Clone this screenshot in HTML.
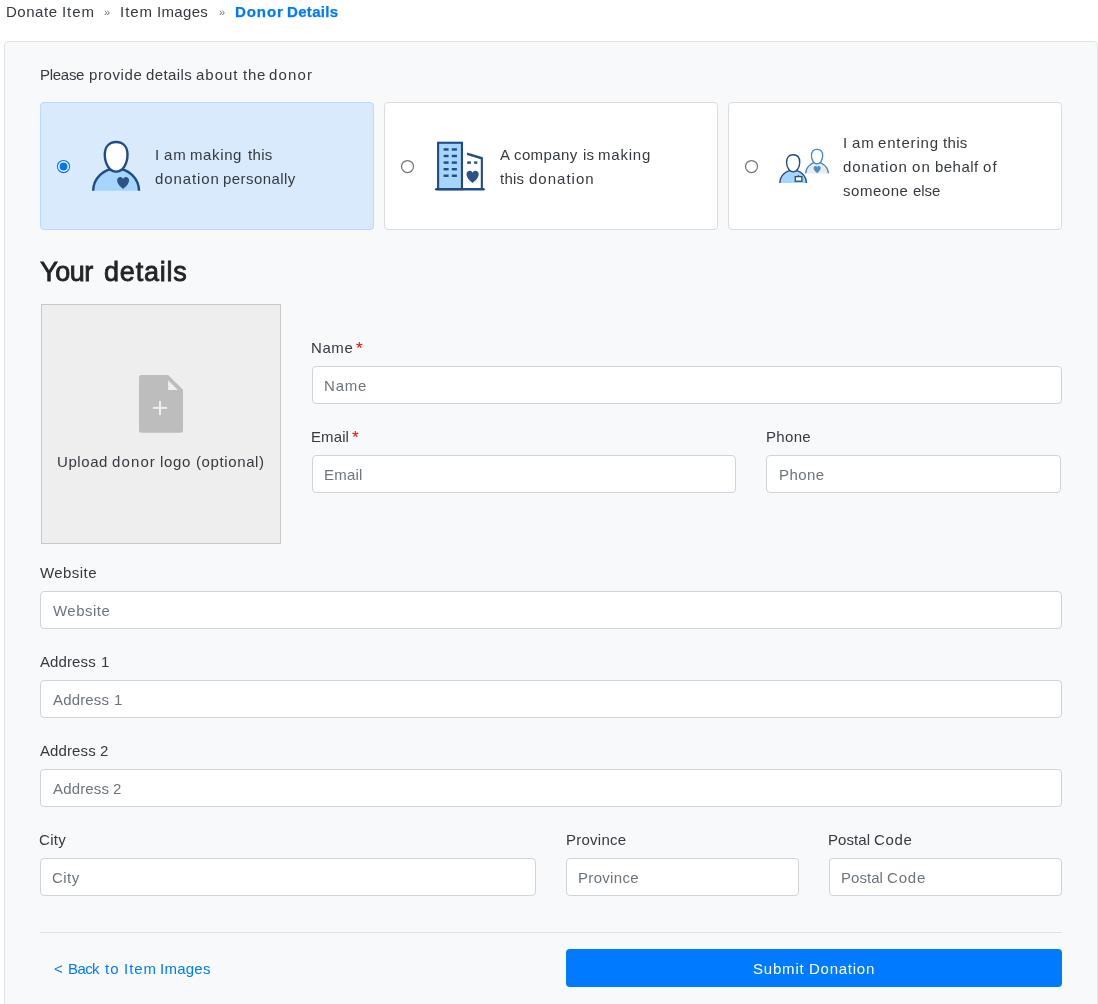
<!DOCTYPE html>
<html><head><meta charset="utf-8">
<style>
*{box-sizing:border-box}
html,body{margin:0;padding:0}
body{width:1098px;height:1004px;overflow:hidden;background:#fff;font-family:"Liberation Sans",sans-serif;font-size:16px;color:#212529;position:relative}
.abs{position:absolute}
.x{position:absolute;white-space:nowrap;will-change:transform}
.sep{position:absolute;font-size:11px;line-height:12px;color:#6c757d;top:6px;will-change:transform}
.star{position:absolute;color:#f00;font-size:17px;line-height:20px;will-change:transform}
.card{left:4px;top:41px;width:1094px;height:963px;background:#f8f9fa;border:1px solid #dfe3e8;border-bottom:0;border-radius:5px 5px 0 0}
.opt{top:102px;width:334px;height:128px;background:#fff;border:1px solid #ddd;border-radius:4px}
.opt.sel{background:#d8eafc;border-color:#b8daff}
.inp{position:absolute;height:38px;background:#fff;border:1px solid #ced4da;border-radius:4px}
.upload{left:41px;top:304px;width:240px;height:240px;background:#eee;border:1px solid #c8c8c8}
.btn{left:566px;top:949px;width:496px;height:38px;background:#007bff;border-radius:4px}
svg{position:absolute;overflow:visible}
</style></head><body>
<div class="abs card"></div>
<div class="abs opt sel" style="left:40px"></div>
<div class="abs opt" style="left:384px"></div>
<div class="abs opt" style="left:728px"></div>
<div class="abs upload"></div>
<div class="inp" style="left:312px;top:366px;width:750px"></div>
<div class="inp" style="left:312px;top:455px;width:424px"></div>
<div class="inp" style="left:766px;top:455px;width:295px"></div>
<div class="inp" style="left:40px;top:591px;width:1022px"></div>
<div class="inp" style="left:40px;top:680px;width:1022px"></div>
<div class="inp" style="left:40px;top:769px;width:1022px"></div>
<div class="inp" style="left:40px;top:858px;width:496px"></div>
<div class="inp" style="left:566px;top:858px;width:233px"></div>
<div class="inp" style="left:829px;top:858px;width:233px"></div>
<div class="abs" style="left:40px;top:932px;width:1022px;height:1px;background:#dee2e6"></div>
<div class="abs btn"></div>
<div class="sep" style="left:104px">&raquo;</div>
<div class="sep" style="left:218.5px">&raquo;</div>
<div class="star" style="left:355.5px;top:339px">*</div>
<div class="star" style="left:351.5px;top:428px">*</div>
<!-- icon 1 -->
<svg style="left:86px;top:136px" width="60" height="60" viewBox="0 0 60 60">
<path d="M7.114,54.7 A23,23 0 0 1 53.086,54.7" fill="#a6d5fe" stroke="#204c84" stroke-width="2.4"/>
<path fill="#fff" stroke="#204c84" stroke-width="2.4" d="M30.15,6 C37.3,6 41.5,11 41.5,18.8 C41.5,27.8 36.8,35.6 30.15,35.6 C23.5,35.6 18.8,27.8 18.8,18.8 C18.8,11 23,6 30.15,6Z"/>
<path d="M6,12 C5.2,11.4 0,7.6 0,3.4 C0,1.4 1.5,0 3.2,0 C4.5,0 5.5,0.8 6,1.9 C6.5,0.8 7.5,0 8.8,0 C10.5,0 12,1.4 12,3.4 C12,7.6 6.8,11.4 6,12Z" fill="#2c5286" transform="translate(31.1 40.9)"/>
</svg>
<!-- icon 2 -->
<svg style="left:430px;top:136px" width="60" height="60" viewBox="0 0 60 60">
<rect x="8.1" y="6.75" width="23.85" height="46.4" fill="#a6d5fe" stroke="#204c84" stroke-width="2.1"/>
<g fill="#244c82">
<rect x="13.6" y="12.25" width="5" height="2.4"/><rect x="21.8" y="12.25" width="5.1" height="2.4"/>
<rect x="13.6" y="18.8" width="5" height="2.4"/><rect x="21.8" y="18.8" width="5.1" height="2.4"/>
<rect x="13.6" y="25.4" width="5" height="2.4"/><rect x="21.8" y="25.4" width="5.1" height="2.4"/>
<rect x="13.6" y="32" width="5" height="2.4"/><rect x="21.8" y="32" width="5.1" height="2.4"/>
<rect x="13.6" y="38.55" width="5" height="2.4"/><rect x="21.8" y="38.55" width="5.1" height="2.4"/>
<rect x="37.2" y="25.4" width="3.7" height="2.4"/><rect x="44.1" y="25.4" width="3.2" height="2.4"/>
</g>
<path d="M37.06,16.45 L52.9,21.2 L52.9,53 L50.8,53 L50.8,23.3 L37.06,19.1Z" fill="#204c84"/>
<path d="M6.2,53.2 H53.6" fill="none" stroke="#204c84" stroke-width="2.4" stroke-linecap="round"/>
<path d="M6,12 C5.2,11.4 0,7.6 0,3.4 C0,1.4 1.5,0 3.2,0 C4.5,0 5.5,0.8 6,1.9 C6.5,0.8 7.5,0 8.8,0 C10.5,0 12,1.4 12,3.4 C12,7.6 6.8,11.4 6,12Z" fill="#2c5286" transform="translate(36.5 34.7) scale(1.017)"/>
</svg>
<!-- icon 3 -->
<svg style="left:774px;top:140px" width="60" height="50" viewBox="0 0 60 50">
<g transform="translate(28.13 6.3) scale(0.495)">
<path d="M7.114,54.7 A23,23 0 0 1 53.086,54.7" fill="#e9ebed" stroke="#3f87c5" stroke-width="2.5"/>
<path fill="#fff" stroke="#3f87c5" stroke-width="2.5" d="M30.15,6 C37.3,6 41.5,11 41.5,18.8 C41.5,27.8 36.8,35.6 30.15,35.6 C23.5,35.6 18.8,27.8 18.8,18.8 C18.8,11 23,6 30.15,6Z"/>
</g>
<path d="M6,12 C5.2,11.4 0,7.6 0,3.4 C0,1.4 1.5,0 3.2,0 C4.5,0 5.5,0.8 6,1.9 C6.5,0.8 7.5,0 8.8,0 C10.5,0 12,1.4 12,3.4 C12,7.6 6.8,11.4 6,12Z" fill="#4a8dc8" transform="translate(39.6 26.1) scale(0.59)"/>
<g transform="translate(1.73 11.3) scale(0.578)">
<path d="M7.114,54.7 A23,23 0 0 1 53.086,54.7" fill="#a6d5fe" stroke="#204c84" stroke-width="2.4"/>
<path fill="#fff" stroke="#204c84" stroke-width="2.4" d="M30.15,6 C37.3,6 41.5,11 41.5,18.8 C41.5,27.8 36.8,35.6 30.15,35.6 C23.5,35.6 18.8,27.8 18.8,18.8 C18.8,11 23,6 30.15,6Z"/>
</g>
<rect x="21.25" y="36.6" width="6.65" height="4.65" fill="#fff" stroke="#204c84" stroke-width="1.3"/>
<path d="M24.5,35.1 V36.4" stroke="#204c84" stroke-width="1.2"/>
</svg>
<!-- upload icon -->
<svg style="left:130px;top:366px" width="62" height="75" viewBox="0 0 62 75">
<path fill="#bdbdbd" d="M11.5,9 H38.2 L53,23.8 V64.3 a2.5,2.5 0 0 1 -2.5,2.5 H11.5 a2.5,2.5 0 0 1 -2.5,-2.5 V11.5 a2.5,2.5 0 0 1 2.5,-2.5Z"/>
<path fill="#eee" d="M38.1,14.2 V23.9 H47.8Z"/>
<rect x="22.8" y="40.9" width="14.3" height="2" fill="#eee"/>
<rect x="29" y="35" width="2" height="14.1" fill="#eee"/>
</svg>
<svg style="left:50px;top:154px" width="28" height="24" viewBox="0 0 28 24"><circle cx="13.5" cy="12.5" r="6.05" fill="#fff" stroke="#0075ff" stroke-width="1.15"/><circle cx="13.5" cy="12.5" r="3.95" fill="#0075ff"/></svg>
<svg style="left:394px;top:154px" width="28" height="24" viewBox="0 0 28 24"><circle cx="13.5" cy="12.5" r="6" fill="#fff" stroke="#767676" stroke-width="1.25"/></svg>
<svg style="left:738px;top:154px" width="28" height="24" viewBox="0 0 28 24"><circle cx="13.5" cy="12.5" r="6" fill="#fff" stroke="#767676" stroke-width="1.25"/></svg>
<div class="x" style="left:5.5px;top:1.8px;font-size:15px;line-height:20px;letter-spacing:0.520px;color:#343a40;font-weight:400;">Donate</div>
<div class="x" style="left:61.5px;top:1.8px;font-size:15px;line-height:20px;letter-spacing:0.933px;color:#343a40;font-weight:400;">Item</div>
<div class="x" style="left:120.3px;top:1.8px;font-size:15px;line-height:20px;letter-spacing:0.967px;color:#343a40;font-weight:400;">Item</div>
<div class="x" style="left:156.8px;top:1.8px;font-size:15px;line-height:20px;letter-spacing:0.320px;color:#343a40;font-weight:400;">Images</div>
<div class="x" style="left:235.4px;top:1.8px;font-size:15px;line-height:20px;letter-spacing:0.925px;color:#007bff;font-weight:700;-webkit-text-stroke:0.25px #007bff;">Donor</div>
<div class="x" style="left:287.4px;top:1.8px;font-size:15px;line-height:20px;letter-spacing:0.333px;color:#007bff;font-weight:700;-webkit-text-stroke:0.25px #007bff;">Details</div>
<div class="x" style="left:39.5px;top:64.8px;font-size:15px;line-height:20px;letter-spacing:-0.280px;color:#343a40;font-weight:400;">Please</div>
<div class="x" style="left:88.6px;top:64.8px;font-size:15px;line-height:20px;letter-spacing:0.600px;color:#343a40;font-weight:400;">provide</div>
<div class="x" style="left:145.9px;top:64.8px;font-size:15px;line-height:20px;letter-spacing:0.383px;color:#343a40;font-weight:400;">details</div>
<div class="x" style="left:196.3px;top:64.8px;font-size:15px;line-height:20px;letter-spacing:0.975px;color:#343a40;font-weight:400;">about</div>
<div class="x" style="left:242.7px;top:64.8px;font-size:15px;line-height:20px;letter-spacing:0.800px;color:#343a40;font-weight:400;">the</div>
<div class="x" style="left:269.4px;top:64.8px;font-size:15px;line-height:20px;letter-spacing:1.175px;color:#343a40;font-weight:400;">donor</div>
<div class="x" style="left:155.4px;top:144.8px;font-size:15px;line-height:20px;letter-spacing:0.000px;color:#343a40;font-weight:400;">I</div>
<div class="x" style="left:163.6px;top:144.8px;font-size:15px;line-height:20px;letter-spacing:1.000px;color:#343a40;font-weight:400;">am</div>
<div class="x" style="left:190.0px;top:144.8px;font-size:15px;line-height:20px;letter-spacing:0.620px;color:#343a40;font-weight:400;">making</div>
<div class="x" style="left:247.5px;top:144.8px;font-size:15px;line-height:20px;letter-spacing:0.333px;color:#343a40;font-weight:400;">this</div>
<div class="x" style="left:155.0px;top:168.8px;font-size:15px;line-height:20px;letter-spacing:0.900px;color:#343a40;font-weight:400;">donation</div>
<div class="x" style="left:223.2px;top:168.8px;font-size:15px;line-height:20px;letter-spacing:0.444px;color:#343a40;font-weight:400;">personally</div>
<div class="x" style="left:500.0px;top:144.8px;font-size:15px;line-height:20px;letter-spacing:0.000px;color:#343a40;font-weight:400;">A</div>
<div class="x" style="left:513.6px;top:144.8px;font-size:15px;line-height:20px;letter-spacing:0.383px;color:#343a40;font-weight:400;">company</div>
<div class="x" style="left:583.2px;top:144.8px;font-size:15px;line-height:20px;letter-spacing:0.100px;color:#343a40;font-weight:400;">is</div>
<div class="x" style="left:598.1px;top:144.8px;font-size:15px;line-height:20px;letter-spacing:0.800px;color:#343a40;font-weight:400;">making</div>
<div class="x" style="left:500.0px;top:168.8px;font-size:15px;line-height:20px;letter-spacing:0.233px;color:#343a40;font-weight:400;">this</div>
<div class="x" style="left:528.5px;top:168.8px;font-size:15px;line-height:20px;letter-spacing:1.014px;color:#343a40;font-weight:400;">donation</div>
<div class="x" style="left:843.4px;top:132.8px;font-size:15px;line-height:20px;letter-spacing:0.000px;color:#343a40;font-weight:400;">I</div>
<div class="x" style="left:851.6px;top:132.8px;font-size:15px;line-height:20px;letter-spacing:1.000px;color:#343a40;font-weight:400;">am</div>
<div class="x" style="left:878.0px;top:132.8px;font-size:15px;line-height:20px;letter-spacing:0.843px;color:#343a40;font-weight:400;">entering</div>
<div class="x" style="left:942.8px;top:132.8px;font-size:15px;line-height:20px;letter-spacing:0.333px;color:#343a40;font-weight:400;">this</div>
<div class="x" style="left:843.0px;top:156.8px;font-size:15px;line-height:20px;letter-spacing:0.900px;color:#343a40;font-weight:400;">donation</div>
<div class="x" style="left:911.6px;top:156.8px;font-size:15px;line-height:20px;letter-spacing:1.200px;color:#343a40;font-weight:400;">on</div>
<div class="x" style="left:934.5px;top:156.8px;font-size:15px;line-height:20px;letter-spacing:0.460px;color:#343a40;font-weight:400;">behalf</div>
<div class="x" style="left:982.8px;top:156.8px;font-size:15px;line-height:20px;letter-spacing:1.200px;color:#343a40;font-weight:400;">of</div>
<div class="x" style="left:843.0px;top:180.8px;font-size:15px;line-height:20px;letter-spacing:0.533px;color:#343a40;font-weight:400;">someone</div>
<div class="x" style="left:912.6px;top:180.8px;font-size:15px;line-height:20px;letter-spacing:-0.033px;color:#343a40;font-weight:400;">else</div>
<div class="x" style="left:40.0px;top:256.2px;font-size:27px;line-height:32px;letter-spacing:-0.400px;color:#212529;font-weight:400;-webkit-text-stroke:0.8px #212529;">Your</div>
<div class="x" style="left:104.0px;top:256.2px;font-size:27px;line-height:32px;letter-spacing:0.800px;color:#212529;font-weight:400;-webkit-text-stroke:0.8px #212529;">details</div>
<div class="x" style="left:56.6px;top:451.8px;font-size:15px;line-height:20px;letter-spacing:0.580px;color:#343a40;font-weight:400;">Upload</div>
<div class="x" style="left:112.1px;top:451.8px;font-size:15px;line-height:20px;letter-spacing:1.125px;color:#343a40;font-weight:400;">donor</div>
<div class="x" style="left:160.2px;top:451.8px;font-size:15px;line-height:20px;letter-spacing:0.700px;color:#343a40;font-weight:400;">logo</div>
<div class="x" style="left:195.9px;top:451.8px;font-size:15px;line-height:20px;letter-spacing:0.611px;color:#343a40;font-weight:400;">(optional)</div>
<div class="x" style="left:311.4px;top:337.8px;font-size:15px;line-height:20px;letter-spacing:0.600px;color:#343a40;font-weight:400;">Name</div>
<div class="x" style="left:324.1px;top:375.8px;font-size:15px;line-height:20px;letter-spacing:0.800px;color:#6c757d;font-weight:400;">Name</div>
<div class="x" style="left:311.4px;top:426.8px;font-size:15px;line-height:20px;letter-spacing:0.100px;color:#343a40;font-weight:400;">Email</div>
<div class="x" style="left:324.1px;top:464.8px;font-size:15px;line-height:20px;letter-spacing:0.225px;color:#6c757d;font-weight:400;">Email</div>
<div class="x" style="left:766.4px;top:426.8px;font-size:15px;line-height:20px;letter-spacing:0.325px;color:#343a40;font-weight:400;">Phone</div>
<div class="x" style="left:779.1px;top:464.8px;font-size:15px;line-height:20px;letter-spacing:0.425px;color:#6c757d;font-weight:400;">Phone</div>
<div class="x" style="left:40.0px;top:562.8px;font-size:15px;line-height:20px;letter-spacing:0.433px;color:#343a40;font-weight:400;">Website</div>
<div class="x" style="left:52.8px;top:600.8px;font-size:15px;line-height:20px;letter-spacing:0.483px;color:#6c757d;font-weight:400;">Website</div>
<div class="x" style="left:40.0px;top:651.8px;font-size:15px;line-height:20px;letter-spacing:0.100px;color:#343a40;font-weight:400;">Address</div>
<div class="x" style="left:100.9px;top:651.8px;font-size:15px;line-height:20px;letter-spacing:0.000px;color:#343a40;font-weight:400;">1</div>
<div class="x" style="left:52.8px;top:689.8px;font-size:15px;line-height:20px;letter-spacing:0.150px;color:#6c757d;font-weight:400;">Address</div>
<div class="x" style="left:113.7px;top:689.8px;font-size:15px;line-height:20px;letter-spacing:0.000px;color:#6c757d;font-weight:400;">1</div>
<div class="x" style="left:40.0px;top:740.8px;font-size:15px;line-height:20px;letter-spacing:0.100px;color:#343a40;font-weight:400;">Address</div>
<div class="x" style="left:100.0px;top:740.8px;font-size:15px;line-height:20px;letter-spacing:0.000px;color:#343a40;font-weight:400;">2</div>
<div class="x" style="left:52.8px;top:778.8px;font-size:15px;line-height:20px;letter-spacing:0.150px;color:#6c757d;font-weight:400;">Address</div>
<div class="x" style="left:112.8px;top:778.8px;font-size:15px;line-height:20px;letter-spacing:0.000px;color:#6c757d;font-weight:400;">2</div>
<div class="x" style="left:39.0px;top:829.8px;font-size:15px;line-height:20px;letter-spacing:0.333px;color:#343a40;font-weight:400;">City</div>
<div class="x" style="left:51.8px;top:867.8px;font-size:15px;line-height:20px;letter-spacing:0.467px;color:#6c757d;font-weight:400;">City</div>
<div class="x" style="left:565.6px;top:829.8px;font-size:15px;line-height:20px;letter-spacing:0.243px;color:#343a40;font-weight:400;">Province</div>
<div class="x" style="left:578.2px;top:867.8px;font-size:15px;line-height:20px;letter-spacing:0.314px;color:#6c757d;font-weight:400;">Province</div>
<div class="x" style="left:828.2px;top:829.8px;font-size:15px;line-height:20px;letter-spacing:0.080px;color:#343a40;font-weight:400;">Postal</div>
<div class="x" style="left:874.1px;top:829.8px;font-size:15px;line-height:20px;letter-spacing:0.667px;color:#343a40;font-weight:400;">Code</div>
<div class="x" style="left:841.3px;top:867.8px;font-size:15px;line-height:20px;letter-spacing:0.040px;color:#6c757d;font-weight:400;">Postal</div>
<div class="x" style="left:886.9px;top:867.8px;font-size:15px;line-height:20px;letter-spacing:0.800px;color:#6c757d;font-weight:400;">Code</div>
<div class="x" style="left:53.5px;top:958.8px;font-size:15px;line-height:20px;letter-spacing:0.000px;color:#007bff;font-weight:400;">&lt;</div>
<div class="x" style="left:67.9px;top:958.8px;font-size:15px;line-height:20px;letter-spacing:-0.600px;color:#007bff;font-weight:400;">Back</div>
<div class="x" style="left:105.1px;top:958.8px;font-size:15px;line-height:20px;letter-spacing:1.200px;color:#007bff;font-weight:400;">to</div>
<div class="x" style="left:123.9px;top:958.8px;font-size:15px;line-height:20px;letter-spacing:0.967px;color:#007bff;font-weight:400;">Item</div>
<div class="x" style="left:160.3px;top:958.8px;font-size:15px;line-height:20px;letter-spacing:0.240px;color:#007bff;font-weight:400;">Images</div>
<div class="x" style="left:752.9px;top:958.8px;font-size:15px;line-height:20px;letter-spacing:0.800px;color:#fff;font-weight:400;">Submit</div>
<div class="x" style="left:809.0px;top:958.8px;font-size:15px;line-height:20px;letter-spacing:0.743px;color:#fff;font-weight:400;">Donation</div></body></html>
